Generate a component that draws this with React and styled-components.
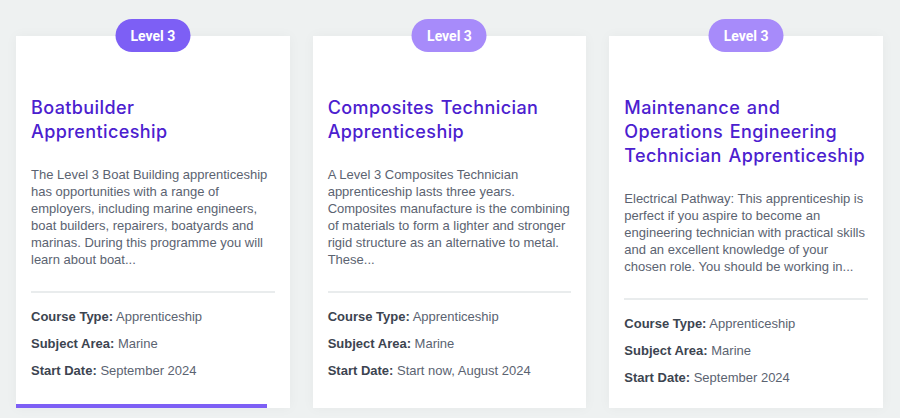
import React from "react";
import styled, { createGlobalStyle } from "styled-components";

const Global = createGlobalStyle`
  html, body { margin: 0; padding: 0; background: #eef1f1; }
  body { font-family: "Liberation Sans", Arial, sans-serif; }
`;

const Grid = styled.div`
  display: grid;
  grid-template-columns: repeat(3, 1fr);
  gap: 23px;
  padding: 36px 17px 11px 16px;
  align-items: stretch;
`;

const Card = styled.article`
  position: relative;
  background: #ffffff;
  padding: 60px 15px 22px;
  display: flex;
  flex-direction: column;
  box-shadow: 0 0 12px rgba(40, 60, 60, 0.04);
`;

const Badge = styled.span`
  position: absolute;
  top: -17px;
  left: 50%;
  transform: translateX(-50%);
  width: 75px;
  height: 33px;
  border-radius: 17px;
  background: ${(p) => (p.$active ? "#7d5ff5" : "#a78bfa")};
  color: #ffffff;
  font-family: Roboto, "Liberation Sans", sans-serif;
  font-weight: 700;
  font-size: 14px;
  display: flex;
  align-items: center;
  justify-content: center;
`;

const Title = styled.h3`
  margin: 0;
  font-family: Inter, "Noto Sans", sans-serif;
  font-weight: 500;
  font-size: 18px;
  line-height: 24px;
  letter-spacing: 0.4px;
  word-spacing: 1.5px;
  color: #4b20cf;
`;

const Desc = styled.p`
  margin: 22px 0 0;
  font-size: 13px;
  line-height: 17px;
  color: #5b6371;
`;

const Divider = styled.hr`
  border: 0;
  border-top: 2px solid #e9eced;
  margin: 23px 0 15px;
`;

const Details = styled.dl`
  margin: 0;
  display: flex;
  flex-direction: column;
  gap: 10px;
`;

const Row = styled.div`
  font-size: 13px;
  line-height: 17px;
  color: #5b6371;
`;

const Label = styled.span`
  font-weight: 700;
  color: #3c4450;
`;

const Bar = styled.span`
  position: absolute;
  left: 0;
  bottom: 0;
  width: 251px;
  height: 4px;
  background: #7d5ff5;
`;

const courses = [
  {
    title: "Boatbuilder Apprenticeship",
    desc: "The Level 3 Boat Building apprenticeship has opportunities with a range of employers, including marine engineers, boat builders, repairers, boatyards and marinas. During this programme you will learn about boat...",
    start: "September 2024",
    active: true,
  },
  {
    title: "Composites Technician Apprenticeship",
    desc: "A Level 3 Composites Technician apprenticeship lasts three years. Composites manufacture is the combining of materials to form a lighter and stronger rigid structure as an alternative to metal. These...",
    start: "Start now, August 2024",
  },
  {
    title: "Maintenance and Operations Engineering Technician Apprenticeship",
    desc: "Electrical Pathway: This apprenticeship is perfect if you aspire to become an engineering technician with practical skills and an excellent knowledge of your chosen role. You should be working in...",
    start: "September 2024",
  },
];

export default function App() {
  return (
    <>
      <Global />
      <Grid>
        {courses.map((c) => (
          <Card key={c.title}>
            <Badge $active={c.active}>Level 3</Badge>
            <Title>{c.title}</Title>
            <Desc>{c.desc}</Desc>
            <Divider />
            <Details>
              <Row>
                <Label>Course Type:</Label> Apprenticeship
              </Row>
              <Row>
                <Label>Subject Area:</Label> Marine
              </Row>
              <Row>
                <Label>Start Date:</Label> {c.start}
              </Row>
            </Details>
            {c.active && <Bar />}
          </Card>
        ))}
      </Grid>
    </>
  );
}
